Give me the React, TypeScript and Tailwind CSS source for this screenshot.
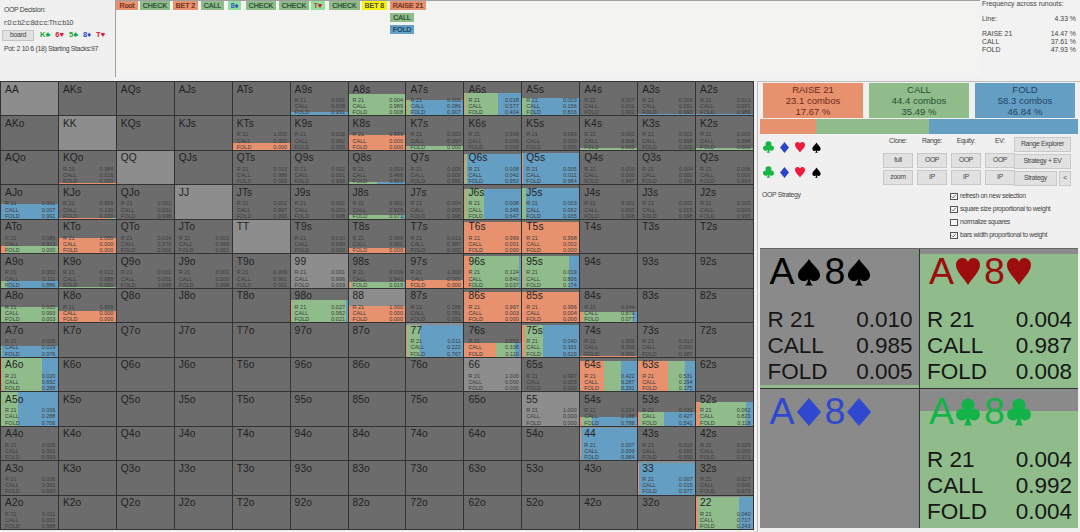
import React from 'react';

type V = [string, number?, number?, number?, number?];

const rows: V[][] = [
  [['AA'],['AKs'],['AQs'],['AJs'],['ATs'],['A9s',.001,.008,.991,3],['A8s',.004,.989,.008,21],['A7s',.006,.086,.907,15],['A6s',.018,.577,.404,22],['A5s',.003,.156,.836,17],['A4s',.007,.001,.992,0],['A3s',.006,.001,.993,1],['A2s',.013,.001,.986,1]],
  [['AKo'],['KK'],['KQs'],['KJs'],['KTs',1,0,0,7],['K9s',.018,.982,0,0],['K8s',.999,0,0,15],['K7s',.003,.997,0,4],['K6s',.999,0,0,0],['K5s',.999,0,0,0],['K4s',.002,.998,0,2],['K3s',.002,.998,0,0],['K2s',.002,.998,0,2]],
  [['AQo'],['KQo',.984,.016,0,1],['QQ'],['QJs'],['QTs',.013,.986,0,0],['Q9s',.002,.001,.998,0],['Q8s',.003,.496,.501,2],['Q7s',.005,0,.995,0],['Q6s',.008,.042,.95,30],['Q5s',.005,.011,.984,31],['Q4s',.003,0,.997,0],['Q3s',.004,0,.996,0],['Q2s',.006,0,.994,0]],
  [['AJo',.001,.007,.991,15],['KJo',.869,.13,0,1],['QJo',.001,.001,.998,0],['JJ'],['JTs',.002,.997,0,0],['J9s',.002,0,.998,0],['J8s',.001,.928,.071,4],['J7s',.004,0,.996,0],['J6s',.008,.345,.647,30],['J5s',.003,.062,.935,31],['J4s',.002,0,.998,0],['J3s',.002,0,.998,0],['J2s',.005,0,.995,0]],
  [['ATo',.086,.913,0,7],['KTo',1,0,0,15],['QTo',.024,.976,0,0],['JTo',.002,.998,.001,0],['TT'],['T9s',.01,.99,0,0],['T8s',.999,.001,0,5],['T7s',.013,.987,0,0],['T6s',.999,.001,0,31],['T5s',.998,.002,0,31],['T4s'],['T3s'],['T2s']],
  [['A9o',.002,.111,.886,7],['K9o',.012,.988,0,1],['Q9o',.001,.001,.998,0],['J9o',.002,0,.998,0],['T9o',.009,.991,.001,0],['99',.001,.996,.003,0],['98s',.039,.941,.019,6],['97s',1,0,0,8],['96s',.124,.84,.037,32],['95s',.019,.806,.174,32],['94s'],['93s'],['92s']],
  [['A8o',.005,.993,.003,15],['K8o',.999,0,0,11],['Q8o'],['J8o'],['T8o'],['98o',.027,.952,.021,22],['88',1,0,0,16],['87s',.188,.781,.031,0],['86s',.997,.003,0,30],['85s',.996,.004,0,30],['84s',.044,.879,.077,10],['83s'],['82s']],
  [['A7o',.005,.019,.976,11],['K7o'],['Q7o'],['J7o'],['T7o'],['97o'],['87o'],['77',.011,.222,.767,32],['76s',.552,.338,.11,14],['75s',.04,.331,.629,32],['74s',1,0,0,1],['73s',.013,0,.987,0],['72s']],
  [['A6o',.02,.692,.288,33],['K6o'],['Q6o'],['J6o'],['T6o'],['96o'],['86o'],['76o'],['66',1,0,0,0],['65s',.997,.003,0,0],['64s',.422,.287,.291,30],['63s',.531,.294,.175,30],['62s']],
  [['A5o',.006,.288,.706,34],['K5o'],['Q5o'],['J5o'],['T5o'],['95o'],['85o'],['75o'],['65o'],['55',1,0,0,0],['54s',.024,.188,.788,9],['53s',.031,.427,.541,14],['52s',.062,.82,.118,24]],
  [['A4o',.005,.001,.993,0],['K4o'],['Q4o'],['J4o'],['T4o'],['94o'],['84o'],['74o'],['64o'],['54o'],['44',.007,.009,.984,32],['43s',.01,0,.99,0],['42s',.029,0,.971,0]],
  [['A3o',.006,.001,.993,0],['K3o'],['Q3o'],['J3o'],['T3o'],['93o'],['83o'],['73o'],['63o'],['53o'],['43o'],['33',.007,.015,.977,32],['32s',.027,0,.973,0]],
  [['A2o',.011,.001,.988,0],['K2o'],['Q2o'],['J2o'],['T2o'],['92o'],['82o'],['72o'],['62o'],['52o'],['42o'],['32o'],['22',.04,.717,.243,32]],
];

function SuitIcon({ s, color, cls }: { s: string; color: string; cls: string }) {
  return (
    <svg viewBox="0 0 24 28" className={cls} fill={color} preserveAspectRatio="none">
      {s === 'spade' && <path d="M12 1C8 8 1 11 1 17C1 21 4 23 7 23C9 23 10.5 22 11 21C11 24 10 26 8 27.5L16 27.5C14 26 13 24 13 21C13.5 22 15 23 17 23C20 23 23 21 23 17C23 11 16 8 12 1Z" />}
      {s === 'heart' && <path d="M12 27C8 20 0 14 0 7C0 3 3 0 6.5 0C9 0 11 1.5 12 4C13 1.5 15 0 17.5 0C21 0 24 3 24 7C24 14 16 20 12 27Z" />}
      {s === 'diamond' && <path d="M12 0L24 14L12 28L0 14Z" />}
      {s === 'club' && (
        <>
          <circle cx="12" cy="7" r="6.5" />
          <circle cx="6" cy="16.5" r="6" />
          <circle cx="18" cy="16.5" r="6" />
          <path d="M11 12C11 20 10 25 8 27.5L16 27.5C14 25 13 20 13 12Z" />
        </>
      )}
    </svg>
  );
}

function Cell({ v }: { v: V }) {
  const [name, r, c, f, h] = v;
  const pair = name[0] === name[1];
  const has = r !== undefined;
  return (
    <div className={`relative overflow-hidden pl-[4px] pr-[2.5px] pt-[1.5px] text-[#222] ${pair ? 'bg-[#8d8d8d]' : 'bg-[#6c6c6c]'}`}>
      {has && !!h && (
        <div style={{ height: h }} className="absolute left-0 right-0 bottom-0 flex">
          <div style={{ flexGrow: r, flexBasis: 0 }} className="bg-[#e8916f]" />
          <div style={{ flexGrow: c, flexBasis: 0 }} className="bg-[#8fbc8a]" />
          <div style={{ flexGrow: f, flexBasis: 0 }} className="bg-[#659ec3]" />
        </div>
      )}
      <div className="relative text-[10.2px] leading-[12px] tracking-[0.1px]">{name}</div>
      {has && (
        <div className="relative mt-[1.5px] text-[5.5px] leading-[6.2px] text-[#3c3c3c]">
          {[['R 21', r!], ['CALL', c!], ['FOLD', f!]].map(([l, n]) => (
            <div key={l as string} className="flex justify-between">
              <span>{l}</span>
              <span>{(n as number).toFixed(3)}</span>
            </div>
          ))}
        </div>
      )}
    </div>
  );
}

function Line({ t, cls }: { t: React.ReactNode; cls: string }) {
  return (
    <div className={`h-[9px] flex items-center justify-center text-[7px] leading-none [-webkit-text-stroke:0.2px] ${cls}`}>{t}</div>
  );
}

function Btn({ t, cls = 'w-[30px]' }: { t: string; cls?: string }) {
  return (
    <div className={`h-[15px] flex items-center justify-center bg-[#e1e1e1] border border-[#c8c8c8] text-[6.8px] tracking-[-0.3px] text-[#444] ${cls}`}>{t}</div>
  );
}

function Check({ on, t }: { on: boolean; t: string }) {
  return (
    <div className="flex items-center gap-[2.5px] h-[13px] text-[6.8px] tracking-[-0.33px] text-[#444]">
      <span className="w-[7.5px] h-[7.5px] border border-[#555] bg-[#f8f8f8] flex items-center justify-center">
        {on && (
          <svg viewBox="0 0 10 10" className="w-[7px] h-[7px]">
            <path d="M1.5 5 L4 7.5 L8.5 2" fill="none" stroke="#333" strokeWidth="1.3" />
          </svg>
        )}
      </span>
      {t}
    </div>
  );
}

function Card({ action, l2, l3, cls }: { action: string; l2: string; l3: string; cls: string }) {
  return (
    <div className={`w-[100px] h-[35px] flex flex-col items-center justify-center text-[9.5px] leading-[11px] ${cls}`}>
      <div>{action}</div>
      <div>{l2}</div>
      <div>{l3}</div>
    </div>
  );
}

function Hand({ suit, color, vals, barH }: { suit: string; color: string; vals?: number[]; barH: number }) {
  return (
    <div className="relative bg-[#8a8a8a] overflow-hidden text-[#161616]">
      <div style={{ height: barH }} className="absolute left-0 right-0 bottom-0 bg-[#8fbc8a]" />
      <div style={{ color }} className="relative pl-[9.5px] h-[46px] flex items-center text-[37.5px] leading-none">
        <span>A</span>
        <SuitIcon s={suit} color={color} cls="w-[24px] h-[28px] ml-[2px]" />
        <span className="ml-[4px]">8</span>
        <SuitIcon s={suit} color={color} cls="w-[24px] h-[28px] ml-[2px]" />
      </div>
      {vals && (
        <div className="relative mt-[12px] pl-[7.5px] pr-[6px] text-[22.5px] leading-[26px]">
          {['R 21', 'CALL', 'FOLD'].map((l, i) => (
            <div key={l} className="flex justify-between">
              <span>{l}</span>
              <span>{vals[i].toFixed(3)}</span>
            </div>
          ))}
        </div>
      )}
    </div>
  );
}

function SuitRow({ cls }: { cls: string }) {
  return (
    <div className={`flex w-[64px] h-[20px] items-center ${cls}`}>
      <span className="w-[16px] flex justify-center"><SuitIcon s="club" color="#16b545" cls="w-[11px] h-[12px]" /></span>
      <span className="w-[16px] flex justify-center"><SuitIcon s="diamond" color="#2b43cc" cls="w-[9px] h-[11px]" /></span>
      <span className="w-[16px] flex justify-center"><SuitIcon s="heart" color="#f01a3a" cls="w-[10px] h-[11px]" /></span>
      <span className="w-[16px] flex justify-center"><SuitIcon s="spade" color="#000" cls="w-[9px] h-[11px]" /></span>
    </div>
  );
}

const SAL = 'bg-[#e8916f] text-[#5a2412]';
const GRN = 'bg-[#8fbc8a] text-[#23452a]';

export default function App() {
  return (
    <div className="w-[1080px] h-[532px] overflow-hidden bg-[#f0f0f0] flex flex-col [font-family:'Liberation_Sans',sans-serif]">
      <div className="h-[81px] flex">
        <div className="w-[115px] pl-[4px] pt-[5px] text-[6.9px] tracking-[-0.32px] text-[#444]">
          <div className="h-[12px]">OOP Decision:</div>
          <div className="h-[9px] mt-[1px]">r:0:c:b2:c:8d:c:c:Th:c:b10</div>
          <div className="flex items-center mt-[2px] h-[12px] -ml-[2px]">
            <div className="w-[32px] h-[11px] bg-[#e1e1e1] border border-[#c4c4c4] flex items-center justify-center">board</div>
            <div className="flex ml-[6px] gap-[5px] text-[7.5px] font-bold tracking-normal">
              <span className="text-[#14a83e]">K♣</span>
              <span className="text-[#d81b35]">6♥</span>
              <span className="text-[#14a83e]">5♣</span>
              <span className="text-[#2b43cc]">8♦</span>
              <span className="text-[#d81b35]">T♥</span>
            </div>
          </div>
          <div className="mt-[3px] whitespace-nowrap">Pot: 2 10 6 (18) Starting Stacks:97</div>
        </div>
        <div className="w-[865px] h-[77px] border-l border-t border-[#a0a0a0] bg-[#f3f3f1] flex items-start gap-[3px]">
          <Line t="Root" cls={`w-[22px] ${SAL}`} />
          <Line t="CHECK" cls={`w-[30px] -ml-[1px] ${GRN}`} />
          <Line t="BET 2" cls={`w-[25px] ${SAL}`} />
          <Line t="CALL" cls={`w-[23px] ${GRN}`} />
          <Line t="8♦" cls="w-[13px] ml-[1px] bg-[#90e09c] text-[#2b43cc]" />
          <Line t="CHECK" cls={`w-[30px] ml-[2px] ${GRN}`} />
          <Line t="CHECK" cls={`w-[30px] ${GRN}`} />
          <Line t="T♥" cls="w-[14px] -ml-[1px] bg-[#90e09c] text-[#c81b30]" />
          <Line t="CHECK" cls={`w-[31px] ml-[1px] ${GRN}`} />
          <Line t="BET 8" cls="w-[25px] -ml-[1px] bg-[#f7f20e] text-[#333]" />
          <div className="flex flex-col items-start gap-[3px]">
            <Line t="RAISE 21" cls={`w-[36px] ${SAL}`} />
            <Line t="CALL" cls={`w-[24px] ${GRN}`} />
            <Line t="FOLD" cls="w-[24px] bg-[#659ec3] text-[#123c5c]" />
          </div>
        </div>
        <div className="w-[100px] pl-[2px] pr-[4px] text-[6.9px] text-[#444] bg-[#f2f2f2] leading-[8px]">
          <div className="whitespace-nowrap">Frequency across runouts:</div>
          <div className="flex justify-between mt-[7px]"><span>Line:</span><span>4.33 %</span></div>
          <div className="flex justify-between mt-[7px]"><span>RAISE 21</span><span>14.47 %</span></div>
          <div className="flex justify-between"><span>CALL</span><span>37.61 %</span></div>
          <div className="flex justify-between"><span>FOLD</span><span>47.93 %</span></div>
        </div>
      </div>
      <div className="flex h-[451px]">
        <div className="w-[754px] h-[449px] grid grid-cols-[repeat(13,1fr)] grid-rows-[repeat(13,1fr)] gap-px bg-[#333] p-px">
          {rows.flat().map(v => <Cell key={v[0]} v={v} />)}
        </div>
        <div className="w-[323px] ml-[3px] border-l border-t border-[#bdbdbd] pl-[2px] pt-[1px] flex flex-col">
          <div className="flex gap-[6px] pl-[3px]">
            <Card action="RAISE 21" l2="23.1 combos" l3="17.67 %" cls="bg-[#e8916f] text-[#6b2c18]" />
            <Card action="CALL" l2="44.4 combos" l3="35.49 %" cls="bg-[#8fbc8a] text-[#27502f]" />
            <Card action="FOLD" l2="58.3 combos" l3="46.84 %" cls="bg-[#659ec3] text-[#1b4764]" />
          </div>
          <div className="flex h-[15px] w-[318px] mt-[1px]">
            <div className="w-[56px] bg-[#e8916f]" />
            <div className="w-[113px] bg-[#8fbc8a]" />
            <div className="w-[149px] bg-[#659ec3]" />
          </div>
          <div className="flex h-[50px] mt-[3px] text-[6.8px] tracking-[-0.3px] text-[#444]">
            <div className="w-[120px]">
              <SuitRow cls="" />
              <SuitRow cls="mt-[5px]" />
            </div>
            <div className="flex gap-[4px] w-[134px] pl-[3px]">
              {[['Clone:', 'full', 'zoom'], ['Range:', 'OOP', 'IP'], ['Equity:', 'OOP', 'IP'], ['EV:', 'OOP', 'IP']].map(([h, a, b]) => (
                <div key={h} className="w-[30px] flex flex-col gap-[2px] items-center">
                  <div className="h-[14px] leading-[7px] text-center">{h}</div>
                  <Btn t={a} />
                  <Btn t={b} />
                </div>
              ))}
            </div>
            <div className="w-[57px] flex flex-col gap-[2px]">
              <Btn t="Range Explorer" cls="w-[57px]" />
              <Btn t="Strategy + EV" cls="w-[57px]" />
              <div className="flex gap-[2px]">
                <Btn t="Strategy" cls="w-[43px]" />
                <Btn t="<" cls="w-[12px]" />
              </div>
            </div>
          </div>
          <div className="flex h-[61px] text-[6.8px] tracking-[-0.3px] text-[#444]">
            <div className="w-[190px] pl-[2px] pt-[3px]">OOP Strategy</div>
            <div className="pt-[3px]">
              <Check on t="refresh on new selection" />
              <Check on t="square size proportional to weight" />
              <Check on={false} t="normalize squares" />
              <Check on t="bars width proportional to weight" />
            </div>
          </div>
          <div className="w-[318px] h-[280px] grid grid-cols-2 grid-rows-2 gap-px bg-[#333] border-t border-[#666]">
            <Hand suit="spade" color="#000" vals={[.01, .985, .005]} barH={3} />
            <Hand suit="heart" color="#9c0d0d" vals={[.004, .987, .008]} barH={134} />
            <Hand suit="diamond" color="#3048cf" barH={0} />
            <Hand suit="club" color="#14b34a" vals={[.004, .992, .004]} barH={117} />
          </div>
        </div>
      </div>
    </div>
  );
}
